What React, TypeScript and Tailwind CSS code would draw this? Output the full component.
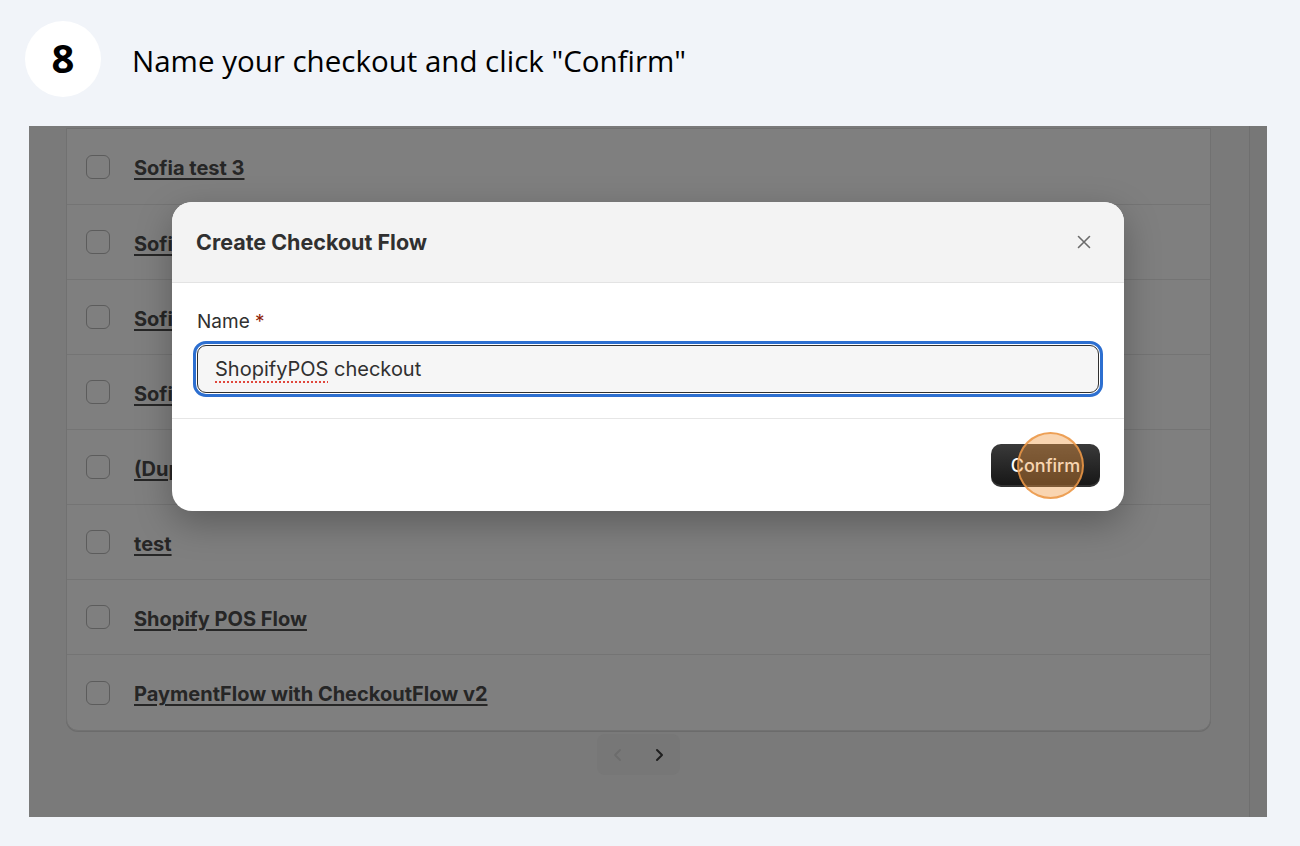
import React from "react";

const rows = [
  "Sofia test 3",
  "Sofia test 2",
  "Sofia test 1",
  "Sofia test",
  "(Duplicate) Checkout Flow",
  "test",
  "Shopify POS Flow",
  "PaymentFlow with CheckoutFlow v2",
];

export default function App() {
  return (
    <div className="w-[1300px] h-[846px] bg-[#f1f4f9] overflow-hidden relative" style={{ fontFamily: "Inter, 'Liberation Sans', sans-serif" }}>
      {/* Step header */}
      <div className="flex items-center h-[126px] pb-[8px] pl-[25px]">
        <div className="w-[76px] h-[76px] rounded-full bg-white flex items-center justify-center">
          <span className="text-[40px] font-bold text-black leading-none pb-[2px]" style={{ fontFamily: "'Open Sans', 'Noto Sans', sans-serif" }}>8</span>
        </div>
        <div className="ml-[31px] text-[29.5px] text-black leading-none pt-[3px]" style={{ fontFamily: "'Open Sans', 'Noto Sans', sans-serif" }}>
          Name your checkout and click "Confirm"
        </div>
      </div>

      {/* Screenshot region */}
      <div className="ml-[29px] w-[1238px] h-[691px] bg-[#7a7a7a] relative overflow-hidden">
        <div className="flex h-full">
          <div className="w-[37px] shrink-0" />
          <div className="w-[1145px] shrink-0 flex flex-col">
            <div className="mt-[2px] bg-[#7f7f7f] border border-[#717171] rounded-b-[12px] shadow-[0_1px_0_rgba(0,0,0,0.12)]">
              {rows.map((r, i) => (
                <div
                  key={i}
                  className={`${i === 0 ? "h-[76px]" : "h-[75px]"} flex items-center pl-[19px] ${i < rows.length - 1 ? "border-b border-[#747474]" : ""}`}
                >
                  <div className="w-[24px] h-[24px] rounded-[6px] border-[1.5px] border-[#5c5c5c]" />
                  <span className="ml-[24px] pt-[3px] text-[20px] font-bold text-[#262626] underline underline-offset-[3px] decoration-[1.5px]">
                    {r}
                  </span>
                </div>
              ))}
            </div>
            <div className="flex justify-center mt-[3px]">
              <div className="w-[83px] h-[41px] rounded-[8px] bg-[#777777] flex items-center justify-between px-[15px]">
                <svg width="12" height="14" viewBox="0 0 12 14">
                  <path d="M8 2 L3 7 L8 12" fill="none" stroke="#6c6c6c" strokeWidth="1.8" strokeLinecap="round" strokeLinejoin="round" />
                </svg>
                <svg width="12" height="14" viewBox="0 0 12 14">
                  <path d="M4 2 L9 7 L4 12" fill="none" stroke="#1f1f1f" strokeWidth="2" strokeLinecap="round" strokeLinejoin="round" />
                </svg>
              </div>
            </div>
          </div>
          <div className="w-[38px] shrink-0" />
          <div className="flex-1 border-l border-[#6f6f6f] bg-[#777777]" />
        </div>

        {/* Modal */}
        <div className="absolute left-[143px] top-[76px] w-[952px] h-[309px] bg-white rounded-[20px] overflow-hidden shadow-[0_12px_36px_rgba(0,0,0,0.28)] flex flex-col">
          <div className="h-[81px] bg-[#f3f3f3] border-b border-[#e3e3e3] flex items-center justify-between pl-[24px] pr-[33px]">
            <span className="text-[21.5px] font-bold text-[#303030]">Create Checkout Flow</span>
            <svg width="14" height="14" viewBox="0 0 14 14">
              <path d="M1.5 1.5 L12.5 12.5 M12.5 1.5 L1.5 12.5" stroke="#6b6b6b" strokeWidth="1.6" strokeLinecap="round" />
            </svg>
          </div>
          <div className="h-[136px] border-b border-[#e6e6e6] px-[25px] pt-[27px]">
            <div className="text-[19px] text-[#303030] leading-[24px]">
              Name <span className="text-[#8e1f0b]">*</span>
            </div>
            <div className="mt-[11px] h-[48px] rounded-[9px] border-[1.5px] border-[#303030] bg-[#f6f6f6] outline-[3px] outline-[#2d6fd0] outline-offset-[1px] flex items-center pl-[17px]">
              <span className="text-[20px] text-[#303030]">
                <span className="underline decoration-dotted decoration-[#e0473c] decoration-2 underline-offset-[5px]">ShopifyPOS</span> checkout
              </span>
            </div>
          </div>
          <div className="flex-1 flex items-start justify-end pt-[25px] pr-[24px]">
            <div className="relative">
              <div className="w-[109px] h-[43px] rounded-[10px] bg-gradient-to-b from-[#3a3a3a] to-[#161616] flex items-center justify-center shadow-[inset_0_-2px_0_rgba(255,255,255,0.12)]">
                <span className="text-[18px] font-medium text-white">Confirm</span>
              </div>
              <div className="absolute left-[26px] top-[-12px] w-[67px] h-[67px] rounded-full bg-[rgba(240,150,60,0.4)] border-2 border-[rgba(235,150,70,0.85)]" />
            </div>
          </div>
        </div>
      </div>
    </div>
  );
}
